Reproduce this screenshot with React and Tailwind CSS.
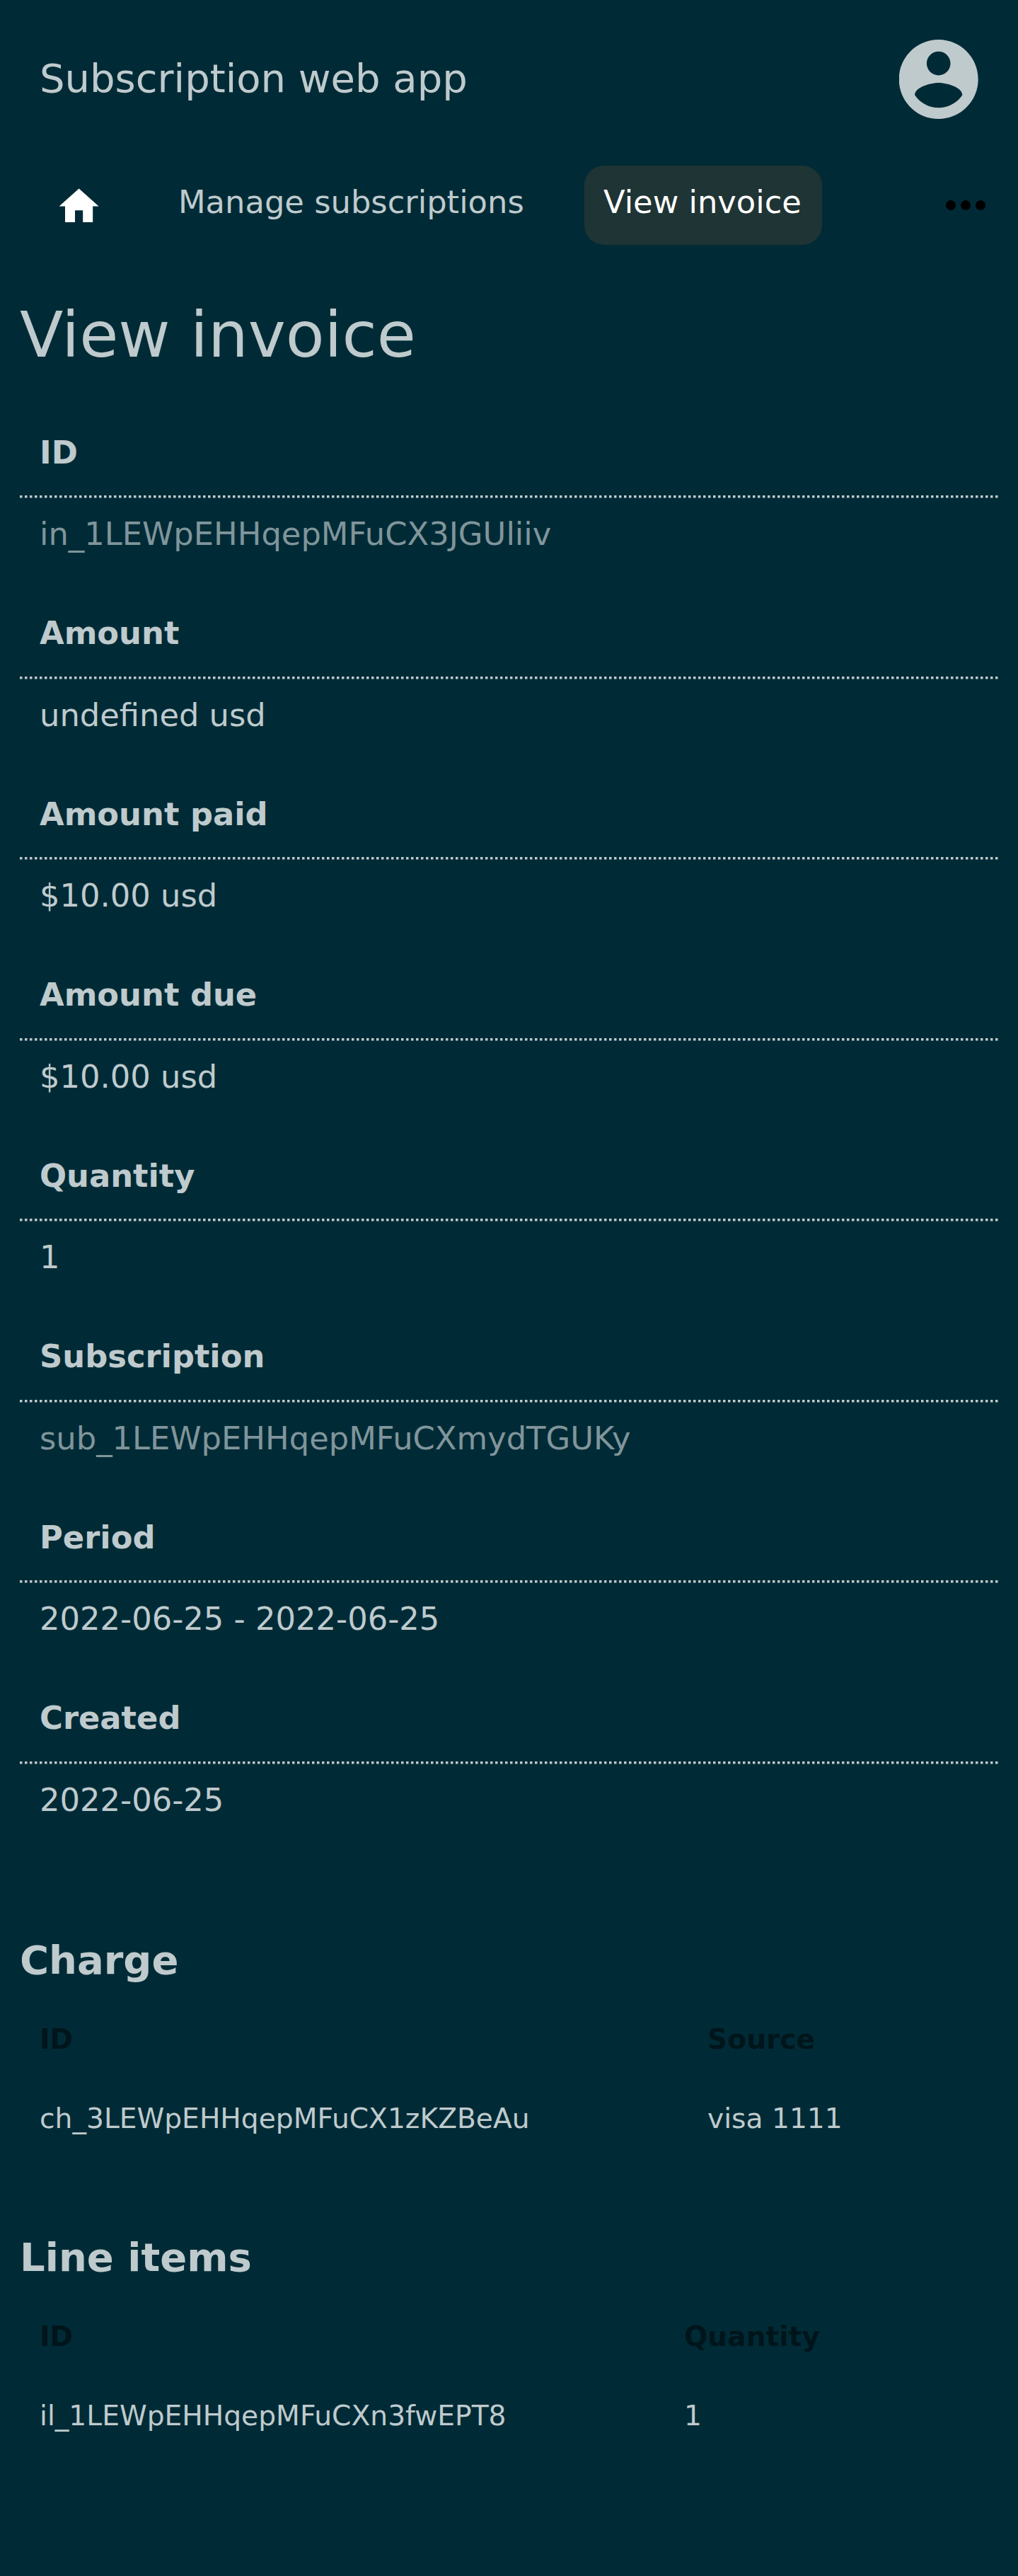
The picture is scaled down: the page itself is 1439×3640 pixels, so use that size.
const rows = [
  ["ID", "in_1LEWpEHHqepMFuCX3JGUliiv", true],
  ["Amount", "undefined usd"],
  ["Amount paid", "$10.00 usd"],
  ["Amount due", "$10.00 usd"],
  ["Quantity", "1"],
  ["Subscription", "sub_1LEWpEHHqepMFuCXmydTGUKy", true],
  ["Period", "2022-06-25 - 2022-06-25"],
  ["Created", "2022-06-25"],
];

function DottedRule() {
  return (
    <svg className="block h-1 w-[1383px]" viewBox="0 0 1383 4">
      <line x1="0" y1="1.7" x2="1383" y2="1.7" stroke="#bfcacd" strokeWidth="3.4" strokeDasharray="3.5 3.5" />
    </svg>
  );
}

function Table({ title, columns, head, cells }) {
  return (
    <section className="h-[420px]">
      <h2 className="h-[98px] text-[56px] font-bold leading-[84px]">{title}</h2>
      <div className={"grid px-7 text-[39.2px] leading-[112px] " + columns}>
        {head.map((h) => (
          <div key={h} className="h-28 font-bold text-[#00151b]">{h}</div>
        ))}
        {cells.map((c) => (
          <div key={c} className="h-28">{c}</div>
        ))}
      </div>
    </section>
  );
}

export default function App() {
  return (
    <div className="h-[3640px] w-[1439px] overflow-hidden bg-[#002b36] font-['DejaVu_Sans',sans-serif] text-[#bfcacd]">
      <header className="flex h-[224px] items-start justify-between px-14 pt-14">
        <div className="text-[56px] leading-[109px]">Subscription web app</div>
        <svg className="size-28" viewBox="2.05 2 20 20" fill="currentColor">
          <path d="M12 2C6.48 2 2 6.48 2 12s4.48 10 10 10 10-4.48 10-10S17.52 2 12 2zm0 3c1.66 0 3 1.34 3 3s-1.34 3-3 3-3-1.34-3-3 1.34-3 3-3zm0 14.2c-2.5 0-4.71-1.28-6-3.22.03-1.99 4-3.08 6-3.08 1.99 0 5.97 1.09 6 3.08-1.29 1.94-3.5 3.22-6 3.22z" />
        </svg>
      </header>
      <nav className="flex h-[134px] items-start pt-2.5 text-[44.8px] leading-[103px]">
        <svg className="ml-[78.4px] mt-[24px] size-[67.2px]" viewBox="0 0 24 24" fill="#fff">
          <path d="M10 20v-6h4v6h5v-8h3L12 3 2 12h3v8z" />
        </svg>
        <div className="ml-[106.4px] w-[574px]">Manage subscriptions</div>
        <div className="h-28 w-[336px] rounded-[28px] bg-[#1f3434] pl-[27px] text-white">View invoice</div>
        <svg className="ml-[175px] mt-[49px] h-[14px] w-[56px]" viewBox="0 0 56 14" fill="#000">
          <circle cx="7" cy="7" r="7" />
          <circle cx="28" cy="7" r="7" />
          <circle cx="49" cy="7" r="7" />
        </svg>
      </nav>
      <main className="px-7">
        <h1 className="h-[224px] pt-[48px] text-[89.6px] leading-[134px]">View invoice</h1>
        <dl className="h-[2146px]">
          {rows.map(([label, value, dim]) => (
            <div key={label} className="h-[255.5px]">
              <dt className="h-[118px] px-7 pt-[23.8px] text-[44.8px] font-bold leading-[67px]">{label}</dt>
              <dd>
                <DottedRule />
                <div className={"px-7 pt-[17px] text-[44.8px] leading-[67px] " + (dim ? "text-[#80959b]" : "")}>{value}</div>
              </dd>
            </div>
          ))}
        </dl>
        <Table title="Charge" columns="grid-cols-[944px_1fr]" head={["ID", "Source"]} cells={["ch_3LEWpEHHqepMFuCX1zKZBeAu", "visa 1111"]} />
        <Table title="Line items" columns="grid-cols-[911px_1fr]" head={["ID", "Quantity"]} cells={["il_1LEWpEHHqepMFuCXn3fwEPT8", "1"]} />
      </main>
    </div>
  );
}
